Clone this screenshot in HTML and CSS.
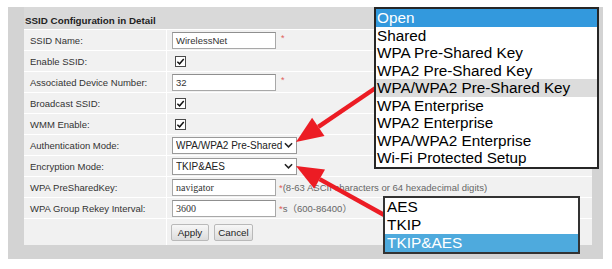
FILE: index.html
```html
<!DOCTYPE html>
<html>
<head>
<meta charset="utf-8">
<link rel="stylesheet" href="styles.css">
</head>
<body>
<div class="stage">
  <div class="panel">
    <div class="title">SSID Configuration in Detail</div>
    <div class="table">
      <div class="row"><div class="label">SSID Name:</div><div class="value"><div class="input">WirelessNet</div><span class="req">*</span></div></div>
      <div class="row"><div class="label">Enable SSID:</div><div class="value"><span class="check"><svg viewBox="0 0 10 10" width="9" height="9"><path d="M1.5 5.2 L4 7.6 L8.6 2.2" fill="none" stroke="#111" stroke-width="1.6"/></svg></span></div></div>
      <div class="row"><div class="label">Associated Device Number:</div><div class="value"><div class="input">32</div><span class="req">*</span></div></div>
      <div class="row"><div class="label">Broadcast SSID:</div><div class="value"><span class="check"><svg viewBox="0 0 10 10" width="9" height="9"><path d="M1.5 5.2 L4 7.6 L8.6 2.2" fill="none" stroke="#111" stroke-width="1.6"/></svg></span></div></div>
      <div class="row"><div class="label">WMM Enable:</div><div class="value"><span class="check"><svg viewBox="0 0 10 10" width="9" height="9"><path d="M1.5 5.2 L4 7.6 L8.6 2.2" fill="none" stroke="#111" stroke-width="1.6"/></svg></span></div></div>
      <div class="row"><div class="label">Authentication Mode:</div><div class="value"><div class="select"><span class="select-text">WPA/WPA2 Pre-Shared Key</span><svg class="chev" viewBox="0 0 10 6" width="9" height="6"><path d="M1 1 L5 5 L9 1" fill="none" stroke="#222" stroke-width="1.7"/></svg></div></div></div>
      <div class="row"><div class="label">Encryption Mode:</div><div class="value"><div class="select"><span class="select-text">TKIP&amp;AES</span><svg class="chev" viewBox="0 0 10 6" width="9" height="6"><path d="M1 1 L5 5 L9 1" fill="none" stroke="#222" stroke-width="1.7"/></svg></div></div></div>
      <div class="row"><div class="label">WPA PreSharedKey:</div><div class="value"><div class="input serif">navigator</div><span class="hint"><span class="star">*</span>(8-63 ASCII characters or 64 hexadecimal digits)</span></div></div>
      <div class="row"><div class="label">WPA Group Rekey Interval:</div><div class="value"><div class="input serif">3600</div><span class="hint"><span class="star">*</span>s（600-86400）</span></div></div>
      <div class="row buttons"><div class="label"></div><div class="value btns"><span class="btn btn-apply">Apply</span><span class="btn btn-cancel">Cancel</span></div></div>
    </div>
  </div>

  <svg class="arrows" width="612" height="269" viewBox="0 0 612 269">
    <line x1="380" y1="85" x2="318.3" y2="126.8" stroke="#ec1c24" stroke-width="4.5"/>
    <polygon points="296,142 324.5,135.9 312.1,117.7" fill="#ec1c24"/>
    <line x1="386" y1="216" x2="319.6" y2="179.1" stroke="#ec1c24" stroke-width="4.5"/>
    <polygon points="296,166 325,169.5 314.2,188.7" fill="#ec1c24"/>
  </svg>

  <div class="dd dd-auth">
    <div class="dd-item sel">Open</div>
    <div class="dd-item">Shared</div>
    <div class="dd-item">WPA Pre-Shared Key</div>
    <div class="dd-item">WPA2 Pre-Shared Key</div>
    <div class="dd-item hover">WPA/WPA2 Pre-Shared Key</div>
    <div class="dd-item">WPA Enterprise</div>
    <div class="dd-item">WPA2 Enterprise</div>
    <div class="dd-item">WPA/WPA2 Enterprise</div>
    <div class="dd-item">Wi-Fi Protected Setup</div>
  </div>

  <div class="dd dd-enc">
    <div class="dd-item">AES</div>
    <div class="dd-item">TKIP</div>
    <div class="dd-item sel2">TKIP&amp;AES</div>
  </div>
</div>
</body>
</html>
```
FILE: styles.css
```css
html, body {
  margin: 0;
  padding: 0;
  background: #fff;
}
.stage {
  position: relative;
  width: 612px;
  height: 269px;
  overflow: hidden;
  padding: 7px 0 0 8px;
  box-sizing: border-box;
  font-family: "Liberation Sans", Arial, sans-serif;
}
.panel {
  width: 595px;
  background: #d3d3d3;
  padding: 0 11px 14px 16px;
  box-sizing: border-box;
}
.title {
  height: 22px;
  box-sizing: border-box;
  padding: 8px 0 0 1px;
  font-size: 9.8px;
  font-weight: bold;
  line-height: 11px;
  color: #222;
  background: #d9d9d9;
}
.table {
  background: #f1f1f1;
}
.row {
  display: grid;
  grid-template-columns: 143px 1fr;
  height: 21px;
  box-sizing: border-box;
  border-top: 1px solid #fff;
  font-size: 9.5px;
  color: #333;
}
.row.buttons {
  height: 27px;
}
.label {
  display: flex;
  align-items: center;
  padding-left: 6px;
  border-right: 1px solid #fff;
  white-space: nowrap;
}
.value {
  display: flex;
  align-items: center;
  padding-left: 5px;
  white-space: nowrap;
}
.input {
  width: 104px;
  height: 17px;
  box-sizing: border-box;
  border: 1px solid #a8a8a8;
  border-top-color: #8f8f8f;
  background: #fff;
  padding-left: 3px;
  line-height: 15px;
  font-size: 9.5px;
  color: #333;
}
.input.serif {
  font-family: "Liberation Serif", "Times New Roman", serif;
  font-size: 10px;
}
.req {
  color: #e0605a;
  margin-left: 5px;
  font-size: 9px;
  align-self: flex-start;
  margin-top: 3px;
}
.hint {
  margin-left: 3px;
  color: #666;
  font-family: "Liberation Sans", "Noto Sans CJK SC", sans-serif;
}
.star {
  color: #e0605a;
}
.check {
  width: 11px;
  height: 11px;
  box-sizing: border-box;
  margin-left: 3px;
  border: 1px solid #4a4a4a;
  background: #fff;
  display: flex;
  align-items: center;
  justify-content: center;
}
.select {
  width: 125px;
  height: 17px;
  box-sizing: border-box;
  border: 1px solid #9a9a9a;
  background: #fff;
  display: flex;
  align-items: center;
  padding-left: 3px;
  font-size: 10px;
  color: #222;
}
.select-text {
  width: 107px;
  overflow: hidden;
  white-space: nowrap;
}
.chev {
  margin-left: auto;
  margin-right: 3px;
}
.btns {
  padding-left: 4px;
  gap: 5px;
}
.btn {
  height: 17px;
  box-sizing: border-box;
  border: 1px solid #b9b9b9;
  border-radius: 2px;
  background: linear-gradient(#f7f7f7, #dcdcdc);
  font-size: 9.8px;
  line-height: 15px;
  color: #222;
  text-align: center;
}
.btn-apply { width: 38px; }
.btn-cancel { width: 39px; }

.arrows {
  position: absolute;
  left: 0;
  top: 0;
  z-index: 1;
}
.dd {
  position: absolute;
  z-index: 2;
  background: #fff;
  border: 2px solid #262626;
  box-sizing: border-box;
  font-family: "Liberation Sans", Arial, sans-serif;
  color: #000;
}
.dd-auth {
  left: 374px;
  top: 7px;
  width: 225px;
  font-size: 15.3px;
}
.dd-auth .dd-item {
  height: 17.5px;
  line-height: 17.5px;
  padding-left: 1px;
  white-space: nowrap;
}
.dd-enc {
  left: 383px;
  top: 196px;
  width: 197px;
  font-size: 15.4px;
  border-color: #333;
}
.dd-enc .dd-item {
  height: 18px;
  line-height: 18px;
  padding-left: 2px;
}
.sel {
  background: #3399dd;
  color: #fff;
}
.sel2 {
  background: #4eaadd;
  color: #fff;
}
.hover {
  background: #dcdcdc;
}
```
